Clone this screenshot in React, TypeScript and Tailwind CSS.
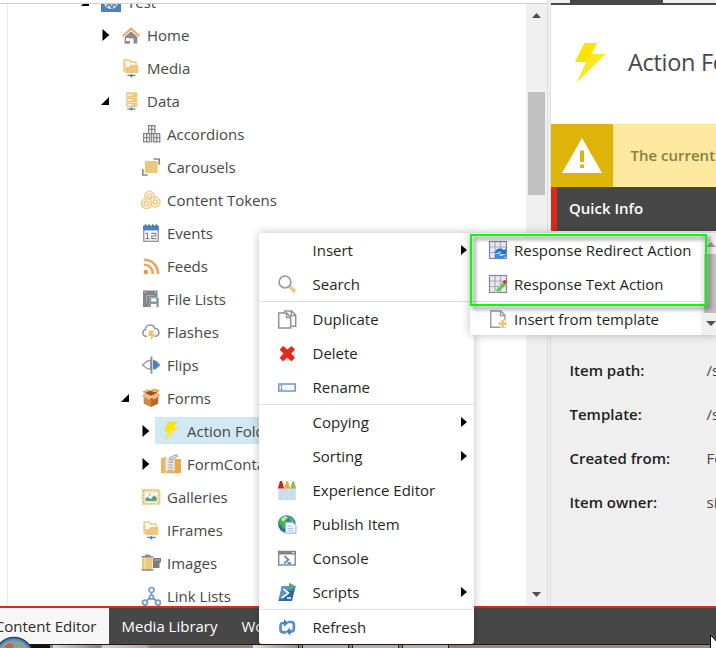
import React from 'react';

const GR = '#8b8b8b';
const SAND = '#edc77d';
const BLUE = '#4a84bf';

const icons: Record<string, React.ReactNode> = {
  site: (
    <>
      <rect width="20" height="20" fill={BLUE} />
      <circle cx="10" cy="10" r="7" fill="#dbe8f4" />
      <path d="M6 15l2-4 3 5 2-5 2 3" stroke={BLUE} strokeWidth="1.6" fill="none" />
    </>
  ),
  home: (
    <>
      <path d="M10 6.2l6.3 5.6V18.6h-3.6v-5h-4v5H3.7v-6.8z" fill={GR} />
      <rect x="5" y="13" width="3.6" height="3" fill="#fff" />
      <path d="M3.7 17.5h5" stroke={GR} strokeWidth="2" />
      <path d="M1.6 11.3L10 3.6l8.4 7.7" fill="none" stroke="#f0a56c" strokeWidth="2" />
      <path d="M13.4 18.6V13" stroke={GR} />
    </>
  ),
  media: (
    <>
      <path d="M3 14V2h5.5l1.2 2H15v3" fill="#fff8e8" stroke={SAND} strokeWidth="1.3" />
      <path d="M4.5 15.2L5 9h3l1.700-2H17.300v7l-.8 1.200z" fill={SAND} />
      <path d="M3 3v11.500h2L4.600 5" fill={SAND} opacity=".7" />
      <path d="M6.300 17.300h8.200M10.400 16v3.500" stroke={BLUE} strokeWidth="1.200" />
      <path d="M8 17l2.400 2.500 2.400-2.500z" fill={BLUE} />
    </>
  ),
  data: (
    <>
      <rect x="5" y="1.200" width="11.500" height="4.800" rx="1.200" fill={SAND} />
      <rect x="5" y="6.300" width="11.500" height="4.800" rx="1.200" fill={SAND} />
      <rect x="5" y="11.400" width="11.500" height="4.800" rx="1.200" fill={SAND} />
      <path d="M6.300 3.800h5M6.300 8.800h5M6.300 13.800h5" stroke="#fff" strokeWidth="1.200" />
      <path d="M6.300 18h8.200" stroke={BLUE} strokeWidth="1.200" />
      <path d="M8 17.700l2.400 2 2.400-2z" fill={BLUE} />
      <path d="M10.400 16v2" stroke={BLUE} />
    </>
  ),
  accordions: (
    <g fill="none" stroke="#858585" strokeWidth="1.3">
      <path d="M7 1.7h7.5M7 5.3h7.5M7.6 1.5v8M10.7 1.5v17M13.8 1.5v8M2 9.7h17M2 13.6h7.5M12 13.6h7.5M2 17.8h7.5M12 17.8h7.5M2.6 9.5v9M5.7 9.5v9M8.7 9.5v9M12.8 9.5v9M15.7 9.5v9M18.7 9.5v9" />
    </g>
  ),
  carousels: (
    <>
      <rect x="4" y="4" width="12.6" height="12" fill={SAND} />
      <path d="M12.5 2h5.7v5.7M1.8 12v6h5" fill="none" stroke="#8b8b8b" strokeWidth="1.7" />
    </>
  ),
  tokens: (
    <g fill="#fff" stroke="#efcf8e" strokeWidth="1.7">
      <circle cx="8.5" cy="6" r="4.6" />
      <circle cx="8.5" cy="6" r="2" />
      <circle cx="14.2" cy="12" r="4.8" />
      <circle cx="14.2" cy="12" r="2.2" />
      <circle cx="5.5" cy="13.6" r="4.9" />
      <circle cx="5.5" cy="13.6" r="2.3" strokeWidth="1.9" />
    </g>
  ),
  events: (
    <>
      <rect x="2.8" y="3" width="14.4" height="15.3" fill="#fff" stroke="#919191" strokeWidth="1.3" />
      <path d="M2.3 3h15.4v4.5H2.3z" fill={BLUE} />
      <path d="M4.5 1.3v3M8 1.3v3M11.7 1.3v3M15.3 1.3v3" stroke="#3a6ea8" strokeWidth="1.3" />
      <path d="M4.5 10.300h2v5.400M4.500 15.700h4M10.300 10.300h4.500V13h-4v2.700h4.800" fill="none" stroke="#828282" strokeWidth="1.200" />
    </>
  ),
  feeds: (
    <g fill="none" stroke="#f0a366" strokeWidth="2.6">
      <circle cx="4.8" cy="16" r="2.200" fill="#f09048" stroke="none" />
      <path d="M3 8.700a8.500 8.500 0 0 1 8.700 9.200M3 3.700c8 0 14 6 14 14.200" />
    </g>
  ),
  files: (
    <>
      <path d="M2 1.5h14.5V8H8.3v10H2z" fill="#858585" />
      <path d="M3.5 3.3h1M14 3.3h1" stroke="#fff" />
      <path d="M5.500 14V6.500h8" fill="none" stroke="#b5b5b5" strokeWidth=".8" />
      <path d="M8 8.500h9.800v9.700H8z" fill="#999" />
      <rect x="9.800" y="9" width="6" height="4" fill="#fff" stroke={BLUE} strokeWidth=".7" />
      <rect x="10" y="15" width="5.400" height="3.200" fill="#fff" />
    </>
  ),
  flashes: (
    <>
      <path d="M6 14.2H4.600a3.400 3.400 0 0 1-.2-6.600A4.600 4.600 0 0 1 9 3a5 5 0 0 1 4.800 3.500 3.900 3.900 0 0 1 1 7.700h-1" fill="#fff" stroke="#979797" strokeWidth="1.600" />
      <path d="M8.200 8.600h5l-2 3.300h3L9.700 19l.6-4.900H7z" fill="#efc46b" />
    </>
  ),
  flips: (
    <>
      <path d="M9.6 5.2v9.2l-3.2-.7L1.6 10 6.4 6z" fill="#fff" stroke="#999" strokeWidth="1.4" />
      <path d="M12 4.8l3 1 4.3 4.2-4.3 4-3 .8z" fill={BLUE} />
      <path d="M10.5 1.4v17.3" stroke="#8d8d8d" strokeWidth="1.8" />
    </>
  ),
  box: (
    <>
      <path d="M2.5 7L10 10v9l-7.2-3.2z" fill="#d18642" />
      <path d="M10 10l7.6-3-.5 8.8L10 19z" fill="#b9682a" />
      <path d="M3.5 5L9 2.6 17 4.7 10 8z" fill="#99551f" />
      <path d="M3.3 5L1 8.3 8.4 12 10 8.4zM17 4.7L10 8.2l2.4 3.300 7.200-3.400z" fill="#f2b77e" />
      <path d="M3.400 4.900L8.800 2.400 7.300 1.200 1.200 3.600zM9 2.400l8 2.200L18.700 2 12.500.6z" fill="#e9a86b" />
    </>
  ),
  bolt: (
    <>
      <path d="M7.4 1h8.2l-3.4 6.1h4.500L3.800 18.700l4-8.400H3.200z" fill="#ffe300" stroke="#f2d33a" strokeWidth=".5" />
      <path d="M9 9.700L16 7 4.500 18z" fill="#ffec50" />
    </>
  ),
  form: (
    <>
      <path d="M0 4.200l5-1.500v16.600H0z" fill="#edb666" />
      <path d="M4.500 4h9v15.300h-9z" fill="#e7e7e7" />
      <path d="M7 8.300h5M7 11h5M7 13.700h5M7 16.300h5" stroke="#aaa" />
      <path d="M13.500 5H20v14.300h-6.500z" fill="#e9a94d" />
      <path d="M5 17h9v2.300H5z" fill="#edb35e" />
      <path d="M8.800 7V3.500L15.500.7l1.100 1.600L11 5v4" fill="none" stroke="#a0a0a0" strokeWidth="1.100" />
    </>
  ),
  galleries: (
    <>
      <rect x="2.200" y="3.200" width="16" height="13.400" fill="#fff" stroke={SAND} strokeWidth="2.400" strokeDasharray="2.800 .5" />
      <rect x="3.800" y="5" width="12.600" height="9.600" fill="#f3faf7" stroke="#ecd9ae" strokeWidth=".6" />
      <path d="M4.500 14v-2.500l2.100-1.700 3 2.500L13 8.300l2.800 2.500V14z" fill="#55a283" />
      <circle cx="8.800" cy="7.500" r="1.200" fill="#e9bb5b" />
    </>
  ),
  images: (
    <>
      <path d="M12 5h8V9l-1.500 1v5H12z" fill="#7c7c7c" />
      <path d="M13.300 7h5.500" stroke="#ddd" strokeDasharray="1.200 1" />
      <rect x="1" y="4.500" width="10.500" height="12" rx="1" fill={SAND} />
      <path d="M4 5v11" stroke="#f8ddb0" strokeWidth="1.500" />
      <path d="M.5 3.800h11.800M.5 17h11.800" stroke="#858585" strokeWidth="1.500" />
      <path d="M4 2.400h5" stroke="#858585" strokeWidth="1.600" />
    </>
  ),
  links: (
    <g fill="#fff" stroke="#6f9cc9" strokeWidth="1.7">
      <path d="M10.500 6v5M10.500 11L4 16M10.500 11l6.500 5" stroke="#8b8b8b" />
      <circle cx="10.500" cy="4" r="2.500" />
      <circle cx="10.500" cy="11" r="2" />
      <circle cx="4" cy="16.600" r="2.500" />
      <circle cx="17" cy="16.600" r="2.500" />
    </g>
  ),
  search: (
    <>
      <path d="M12.300 12.200l5.800 5.600" stroke="#efc97f" strokeWidth="3.600" />
      <circle cx="8" cy="8" r="5.900" fill="#fff" stroke="#9c9c9c" strokeWidth="1.700" />
    </>
  ),
  duplicate: (
    <g fill="#fff" stroke="#919191" strokeWidth="1.5">
      <path d="M6.700 2h8l4 4v11.300h-5M14.300 2.300v4.200h4" />
      <path d="M1.700 4h8l4 4v11H1.700zM9.500 4.300v4.200h4" />
    </g>
  ),
  delete: <path d="M3.500 6.500L6.300 3.800l4 3.700 4.200-3.700 2.700 2.700-3.800 4 3.800 4.200-2.900 2.900-4-3.900-4.200 3.900-2.700-2.800 3.800-4.300z" fill="#e02b20" stroke="#e02b20" strokeLinejoin="round" strokeWidth="1.200" />,
  rename: (
    <>
      <rect x="1.800" y="7" width="16.400" height="7" fill="#fff" stroke="#6b98c7" strokeWidth="1.500" />
      <path d="M4.500 8.700v3.700M3.300 8.500h2.400M3.300 12.400h2.400" stroke="#888" strokeWidth=".8" />
    </>
  ),
  crayons: (
    <>
      <path d="M1 8h18v12H1z" fill="#cfe3ee" />
      <path d="M.8 8.500L3 1h2l2.200 7.500z" fill="#cd2229" />
      <path d="M7 8.500L9.300 1.300h1.600l2.400 7.200z" fill="#efb022" />
      <path d="M13.200 8.500l2.300-7.300H17l2.200 7.300z" fill="#8fb664" />
      <path d="M4 8.500V20M7.300 8v12M10.200 8.500V20M13.300 8v12M16.200 8.500V20" stroke="#b4d2e0" strokeWidth=".7" />
    </>
  ),
  publish: (
    <>
      <circle cx="9.800" cy="10" r="8.800" fill="#286fae" />
      <path d="M2 6a9 9 0 0 1 7-4.800L12 4 8 8l1 5-3 2-1.500-4L1 10z" fill="#48b34b" />
      <path d="M11 2l5 3 2 4-5-2z" fill="#55bd52" />
      <path d="M4 5l4-3 3 1-5 5z" fill="#b9e8b7" />
      <path d="M8.500 8.200h7l3.500 3v8H8.500z" fill="#edf4fc" stroke="#9eb5d2" />
      <path d="M10.500 12h4M10.500 14.500h6M10.500 16.800h6" stroke="#b2c4dd" />
    </>
  ),
  console: (
    <>
      <rect x="1.700" y="3.500" width="16.600" height="13.500" fill="#fff" stroke="#8d8d8d" strokeWidth="1.500" />
      <path d="M1 3h18v3.500H1z" fill="#858585" />
      <path d="M15.200 4.600h2" stroke="#fff" />
      <path d="M7.500 8l4 3.800-4.500 3.500M10.500 15.200h3.500" fill="none" stroke={BLUE} strokeWidth="1.700" />
    </>
  ),
  scripts: (
    <>
      <path d="M5 4.200h13.600L15 19H1.400z" fill="#2f6aa3" />
      <path d="M5 4.200h9L5 16l-3.400 2z" fill="#5c94c4" />
      <path d="M6.400 6.800l5 4.200-6.600 5M10 16h4" fill="none" stroke="#fff" strokeWidth="1.700" />
      <path d="M12 .8l7.500 4-7.500 4.400z" fill="#56a67d" />
    </>
  ),
  refresh: (
    <g fill="none" stroke="#568cc3" strokeWidth="2.6">
      <path d="M9.300 15.400H6A2.800 2.800 0 0 1 3.500 12.600V8.600A2.800 2.800 0 0 1 6.200 6H8" />
      <path d="M10.700 5h3.500a2.800 2.800 0 0 1 2.700 2.800v4a2.800 2.800 0 0 1-2.700 2.800H12.500" />
      <path d="M7 2.200v7.600l4.300-3.800zM13.300 10.600v8l-4.400-4z" fill="#447fba" stroke="none" />
    </g>
  ),
  grid: (
    <>
      <rect x="1.500" y="1.500" width="17" height="17" fill="#e8e9f6" stroke="#85858f" strokeWidth="1.200" />
      <path d="M7 2v16M12.500 2v16M2 7h16M2 12.500h16" stroke="#a9a9b8" strokeWidth="1.200" />
    </>
  ),
  template: (
    <>
      <path d="M2.800 2h10l4.200 4.200V18.300H2.800zM12.500 2.300v4.200h4.200" fill="#fff" stroke="#999" strokeWidth="1.400" />
      <path d="M14.700 10.700v8M10.700 14.700h8" stroke="#fff" strokeWidth="5" />
      <path d="M14.700 10.700v8M10.700 14.700h8" stroke="#efc678" strokeWidth="2.800" />
    </>
  ),
};

icons.redirect = (
  <>
    {icons.grid}
    <path d="M6.500 13c1.500-5 7-5.500 9.300-2.700L18 8.500V14h-6l2-1.700c-2-1.500-4-.8-5 .7z" fill="#1675d5" />
    <path d="M18.800 14.500c-1.500 4.500-7.300 5.500-9.600 3L7 19v-5.300h5.700L11 15.500c1.600 1 3.600.5 4.800-1z" fill="#358be3" />
  </>
);
icons.textAction = (
  <>
    {icons.grid}
    <path d="M7.500 18.700l1.500-4.500 6.500-7 3 2.800-6.700 7z" fill="#4ebb42" stroke="#eaf7e5" strokeWidth=".6" />
    <path d="M14.300 8.200l1.800-2c1-1 3.500 1 2.600 2.300l-1.700 2z" fill="#df3630" />
    <path d="M9.700 15.500l6-6.500" stroke="#a4e892" />
  </>
);

function Icon({ name, className = '' }: { name: string; className?: string }) {
  return (
    <svg viewBox="0 0 20 20" className={`h-5 w-5 shrink-0 ${className}`}>
      {icons[name]}
    </svg>
  );
}

type Node = { label: string; icon: string; depth: 0 | 1 | 2 | 3; arrow?: 'open' | 'closed'; selected?: boolean };

const tree: Node[] = [
  { label: 'Test', icon: 'site', depth: 0, arrow: 'open' },
  { label: 'Home', icon: 'home', depth: 1, arrow: 'closed' },
  { label: 'Media', icon: 'media', depth: 1 },
  { label: 'Data', icon: 'data', depth: 1, arrow: 'open' },
  { label: 'Accordions', icon: 'accordions', depth: 2 },
  { label: 'Carousels', icon: 'carousels', depth: 2 },
  { label: 'Content Tokens', icon: 'tokens', depth: 2 },
  { label: 'Events', icon: 'events', depth: 2 },
  { label: 'Feeds', icon: 'feeds', depth: 2 },
  { label: 'File Lists', icon: 'files', depth: 2 },
  { label: 'Flashes', icon: 'flashes', depth: 2 },
  { label: 'Flips', icon: 'flips', depth: 2 },
  { label: 'Forms', icon: 'box', depth: 2, arrow: 'open' },
  { label: 'Action Folder', icon: 'bolt', depth: 3, arrow: 'closed', selected: true },
  { label: 'FormContainer', icon: 'form', depth: 3, arrow: 'closed' },
  { label: 'Galleries', icon: 'galleries', depth: 2 },
  { label: 'IFrames', icon: 'media', depth: 2 },
  { label: 'Images', icon: 'images', depth: 2 },
  { label: 'Link Lists', icon: 'links', depth: 2 },
];

const indent = ['pl-[73px]', 'pl-[93px]', 'pl-[113px]', 'pl-[133px]'];

function TreeRow({ node }: { node: Node }) {
  return (
    <div className={`flex h-[33px] shrink-0 items-center ${indent[node.depth]}`}>
      <svg viewBox="0 0 14 16" className="mt-px h-4 w-3.5 shrink-0">
        {node.arrow === 'closed' && <path d="M1.500 2v12L8.300 8z" />}
        {node.arrow === 'open' && <path d="M8 4v8H0z" />}
      </svg>
      <div className={`flex h-[27px] items-center whitespace-nowrap pl-1.5 ${node.selected ? 'bg-[#d0e9f4] pr-4' : ''}`}>
        <Icon name={node.icon} className="mt-px" />
        <span className="pl-1.5">{node.label}</span>
      </div>
    </div>
  );
}

function MenuItem({ label, icon, more }: { label: string; icon?: string; more?: boolean }) {
  return (
    <div className="flex h-[34px] shrink-0 items-center pl-[18px] pr-[7px]">
      <div className="w-[35.5px]">{icon && <Icon name={icon} />}</div>
      <span className="flex-1 whitespace-nowrap">{label}</span>
      {more && (
        <svg viewBox="0 0 6 12" className="h-3 w-1.5">
          <path d="M0 1v10l6-5z" />
        </svg>
      )}
    </div>
  );
}

function SubItem({ label, icon }: { label: string; icon: string }) {
  return (
    <div className="flex h-[34px] shrink-0 items-center gap-1.5 whitespace-nowrap pl-[18px]">
      <Icon name={icon} />
      {label}
    </div>
  );
}

const Separator = () => <div className="h-px shrink-0 bg-[#dedede]" />;

function Info({ label, value }: { label: string; value: string }) {
  return (
    <div className="flex h-11 shrink-0 items-center whitespace-nowrap">
      <span className="w-[137px] shrink-0 font-semibold text-[#1f1f1f]">{label}</span>
      <span>{value}</span>
    </div>
  );
}

export default function App() {
  return (
    <div className="relative flex h-[648px] w-[716px] flex-col overflow-hidden bg-white font-['Open_Sans',sans-serif] text-[15px] leading-5 text-[#474747]">
      <div className="flex h-[606px] shrink-0">
        <div className="flex w-[547px] shrink-0 flex-col">
          <div className="h-1 shrink-0 border-b border-[#cfcfcf]" />
          <div className="flex min-h-0 flex-1">
            <div className="ml-[7px] flex w-[519px] flex-col overflow-hidden border-l border-[#e9e9e9]">
              <div className="-mt-[19px] flex flex-col">
                {tree.map((n) => (
                  <TreeRow key={n.label} node={n} />
                ))}
              </div>
            </div>
            <div className="flex w-[21px] flex-col items-center bg-[#f0f0f0]">
              <svg viewBox="0 0 9 5" className="mt-[9px] h-[5px] w-[9px]">
                <path d="M4.500 0L9 5H0z" fill="#505050" />
              </svg>
              <div className="mt-[74px] h-[103px] w-[17px] bg-[#c1c1c1]" />
              <svg viewBox="0 0 9 5" className="mb-[9px] mt-auto h-[5px] w-[9px]">
                <path d="M4.500 5L9 0H0z" fill="#505050" />
              </svg>
            </div>
          </div>
        </div>
        <div className="w-1 shrink-0 border-x border-[#dedede] bg-[#f0f0f0]" />
        <div className="flex w-[165px] shrink-0 flex-col overflow-hidden bg-[#efefef]">
          <div className="h-[5px] shrink-0 border-b-2 border-[#474747] pl-[19px]">
            <div className="h-[3px] w-[93px] bg-[#474747]" />
          </div>
          <div className="flex h-[119px] shrink-0 items-center gap-[22px] whitespace-nowrap bg-white pl-6 text-[23.5px]">
            <svg viewBox="0 0 31 40" className="mb-[3px] h-10 w-[31px] shrink-0">
              <path d="M9.500 0H22l-6 11h14.500L1.500 39.500 11 19H0z" fill="#ffe81f" />
              <path d="M9.500 0H22l-7.500 15L11 19H0z" fill="#ffe300" />
              <path d="M13 16l17-4.500L2.500 38.500 12 20z" fill="#fee62e" />
            </svg>
            <span className="pb-1.5 tracking-[-0.3px]">Action Folder</span>
          </div>
          <div className="flex h-[63px] shrink-0 whitespace-nowrap bg-[#fce99f]">
            <div className="flex w-[62px] shrink-0 items-center justify-center bg-[#dfb40a]">
              <svg viewBox="0 0 40 35" className="h-[35px] w-10">
                <path d="M20 0l20 35H0z" fill="#fff" />
                <path d="M18 12.500h4v11.500h-4zM18 26.500h4v3.500h-4z" fill="#dfb40a" />
              </svg>
            </div>
            <span className="self-center pb-0.5 pl-[17.5px] font-semibold text-[#8b7e3b]">The current item</span>
          </div>
          <div className="flex h-11 shrink-0 items-center border-l-[6px] border-[#dc291e] bg-[#474747] pb-0.5 pl-3 font-semibold text-white">Quick Info</div>
          <div className="flex flex-col pl-[18.5px] pt-[117px]">
            <Info label="Item path:" value="/sitecore" />
            <Info label="Template:" value="/sitecore" />
            <Info label="Created from:" value="Folder" />
            <Info label="Item owner:" value="sitecore" />
          </div>
        </div>
      </div>

      <div className="flex h-[38px] shrink-0 items-stretch border-t-2 border-[#dc291e] bg-[#474747] text-white">
        <div className="flex w-[109px] shrink-0 items-center justify-end whitespace-nowrap bg-[#f7f7f7] pr-[12.5px] text-[#2b2b2b]">Content Editor</div>
        <div className="flex items-center gap-6 whitespace-nowrap pl-[12.5px]">
          <span>Media Library</span>
          <span>Workbox</span>
        </div>
      </div>

      <div className="flex h-1 shrink-0 gap-[3px] border-t border-[#1c1a1a] bg-[#9a8a86]">
        <div className="w-[50px] bg-[#141012]" />
        <div className="w-[46px] bg-gradient-to-r from-[#dedad9] to-[#8c8280]" />
        <div className="w-[46px] bg-gradient-to-r from-[#d9d0ce] to-[#b5a6a3]" />
        <div className="w-[99px] bg-[#96867f]" />
        <div className="w-[46px] border-r border-[#2a2424] bg-gradient-to-r from-[#e9e4e3] to-[#a89b98]" />
        <div className="w-[47px] border-x border-[#2a2424] bg-[#c6bbb8]" />
        <div className="w-[47px] border-x border-[#2a2424] bg-[#c6bbb8]" />
        <div className="w-[47px] border-x border-[#2a2424] bg-[#c6bbb8]" />
      </div>

      <svg viewBox="0 0 36 12" className="absolute bottom-0 left-0 h-3 w-9">
        <circle cx="14" cy="20.500" r="19" fill="#5d88a8" stroke="#1e4565" strokeWidth="1.500" />
        <circle cx="14" cy="21" r="16.500" fill="#8da9bb" opacity=".7" />
        <path d="M4 12c2-4 5-5.500 8.500-4L13 12z" fill="#e25a25" />
        <path d="M14 12l.5-3c3 1 5 1 8 .3L21 12z" fill="#8bb13d" />
      </svg>

      <div className="absolute left-[259px] top-[233px] flex h-[411px] w-[215px] flex-col rounded-[3px] bg-white text-[#1f1f1f] shadow-[0_0_10px_rgba(0,0,0,0.25)]">
        <MenuItem label="Insert" more />
        <MenuItem label="Search" icon="search" />
        <Separator />
        <MenuItem label="Duplicate" icon="duplicate" />
        <MenuItem label="Delete" icon="delete" />
        <MenuItem label="Rename" icon="rename" />
        <Separator />
        <MenuItem label="Copying" more />
        <MenuItem label="Sorting" more />
        <MenuItem label="Experience Editor" icon="crayons" />
        <MenuItem label="Publish Item" icon="publish" />
        <MenuItem label="Console" icon="console" />
        <MenuItem label="Scripts" icon="scripts" more />
        <Separator />
        <MenuItem label="Refresh" icon="refresh" />
      </div>

      <div className="absolute left-[470px] top-[233px] flex h-[102px] w-[248px] overflow-hidden rounded-[3px] bg-white text-[#1f1f1f] shadow-[0_0_10px_rgba(0,0,0,0.25)]">
        <div className="flex w-[231px] flex-col">
          <SubItem label="Response Redirect Action" icon="redirect" />
          <SubItem label="Response Text Action" icon="textAction" />
          <Separator />
          <SubItem label="Insert from template" icon="template" />
        </div>
        <div className="flex w-[17px] flex-col items-center bg-[#f0f0f0]">
          <svg viewBox="0 0 10 5" className="ml-0.5 mt-[9px] h-[5px] w-2.5">
            <path d="M5 0l5 5H0z" fill="#a3a3a3" />
          </svg>
          <div className="ml-1 mt-[7px] h-[59px] w-[15px] bg-[#c1c1c1]" />
          <svg viewBox="0 0 10 5" className="ml-0.5 mt-2 h-[5px] w-2.5">
            <path d="M5 5l5-5H0z" fill="#505050" />
          </svg>
        </div>
      </div>

      <div className="absolute left-[470px] top-[234px] h-[72px] w-[237px] border-2 border-[#00ff00] drop-shadow-[3px_3px_2px_rgba(0,0,0,0.6)]" />

      <svg viewBox="0 0 10 16" className="absolute left-[710px] top-[635px] h-4 w-2.5">
        <path d="M.5 0v16L4 13l2 3 4-6z" fill="#fff" stroke="#101020" />
      </svg>
    </div>
  );
}
